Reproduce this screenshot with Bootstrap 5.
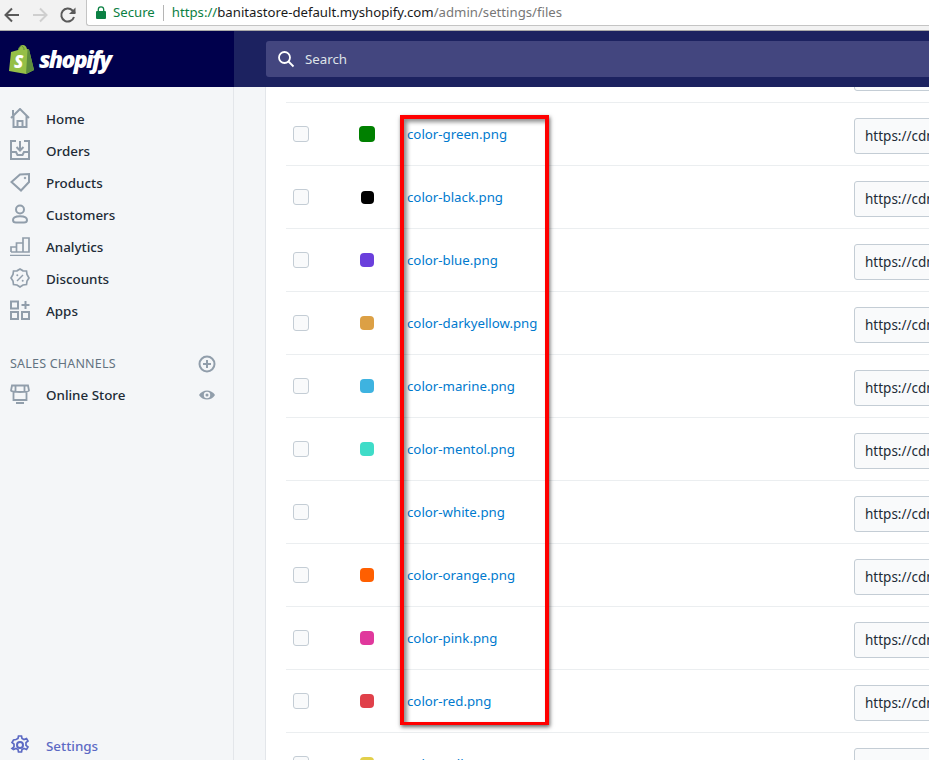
<!DOCTYPE html>
<html lang="en">
<head>
  <meta charset="UTF-8" />
  <title>Files - Shopify admin</title>
  <meta name="viewport" content="width=device-width, initial-scale=1" />
  <link href="https://cdn.jsdelivr.net/npm/bootstrap@5.3.2/dist/css/bootstrap.min.css" rel="stylesheet" />
  <style>
    html, body { height: 760px; overflow: hidden; }
    body { font-family: "Noto Sans", "Open Sans", sans-serif; font-size: 14px; background: #fff; position: relative; }

    .chrome-bar { height: 31px; background: #f2f2f2; border-bottom: 1px solid #a9a9a9; padding-left: 1px; }
    .chrome-btn { width: 22px; height: 22px; margin-right: 6px; flex: none; }
    .omnibox { flex: 1; height: 26px; margin-top: -4px; margin-left: 1px; background: #fff; border: 1px solid #c4c4c4; border-top: 0; border-right: 0; border-radius: 0 0 0 3px; font-size: 13.2px; padding-left: 9px; white-space: nowrap; overflow: hidden; }
    .secure-txt { color: #0b8043; margin-left: 7px; }
    .omni-sep { width: 1px; height: 16px; background: #b5b5b5; margin: 0 8px; }
    .url-scheme { color: #0b8043; }
    .url-host { color: #1a1a1a; }
    .url-path { color: #777; }

    .top-strip { height: 56px; background: #1c2260; }
    .brand-area { width: 234px; background: #00004c; padding-left: 9px; flex: none; }
    .brand-word { color: #fff; font-family: "Open Sans", sans-serif; font-weight: 800; font-style: italic; font-size: 23px; letter-spacing: -1.7px; margin-left: 4px; line-height: 1; }
    .search-box { margin-left: 32px; flex: 1; height: 36px; background: #43467f; border-radius: 3px 0 0 3px; color: #dfe3e8; padding-left: 11px; font-size: 13.3px; }
    .search-box svg { margin-right: 10px; }
    .search-box span { padding-top: 2px; }

    .shell { height: 673px; background: #f4f6f8; }
    .side-nav { width: 234px; flex: none; border-right: 1px solid #e3e6ea; position: relative; padding-top: 16px; }
    .nav-entry { height: 32px; padding-left: 10px; color: #212b36; font-weight: 500; font-size: 13.4px; }
    .nav-entry svg { width: 20px; height: 20px; margin-right: 16px; margin-top: -2px; flex: none; color: #919eab; }
    .channels-head { height: 29px; margin-top: 23px; padding: 0 17px 0 10px; color: #637381; font-size: 12.5px; letter-spacing: .2px; }
    .nav-trail { width: 18px; height: 18px; color: #919eab; flex: none; }
    .channels-head .nav-trail { margin-top: -2px; }
    .nav-entry .nav-trail { width: 18px; height: 18px; margin-right: 0; margin-top: 0; }
    .online-row { padding-right: 17px; }
    .settings-row { position: absolute; left: 0; bottom: -2px; color: #5c6ac4; height: 32px; }
    .settings-row svg { color: #5c6ac4; }

    .gutter { width: 32px; flex: none; border-right: 1px solid #e3e6ea; }
    .main-panel { flex: 1; background: #fff; overflow: hidden; padding-left: 20px; }
    .file-list { margin-top: -47px; }
    .file-row { height: 63px; border-bottom: 1px solid #ebeef0; }
    .file-check { width: 16px; height: 16px; margin-left: 7px; flex: none; background: #f9fafb; border: 1px solid #c4cdd5; border-radius: 3px; }
    .swatch-cell { width: 42px; margin-left: 37px; flex: none; }
    .swatch { width: 14px; height: 14px; border-radius: 4px; }
    .sw-green { background: #008000; width: 16px; height: 16px; border-radius: 4px; }
    .sw-black { background: #000; width: 13px; height: 13px; border-radius: 4px; }
    .sw-blue { background: #6a3fdc; }
    .sw-yellowdark { background: #dca045; }
    .sw-marine { background: #3eb3e0; }
    .sw-mentol { background: #3fdcc8; }
    .sw-orange { background: #ff5f00; }
    .sw-pink { background: #e0389c; }
    .sw-red { background: #e0404a; }
    .sw-yellow { background: #e2cf4a; }
    .file-name { color: #007ace; margin-left: 19px; width: 447px; flex: none; text-decoration: none; font-size: 13.25px; line-height: 20px; padding-bottom: 1px; }
    .url-field { flex: none; width: 120px; height: 36px; margin-top: 4px; background: #f9fafb; border: 1px solid #c4cdd5; border-radius: 3px; padding: 0 10px; color: #212b36; font-size: 13.5px; line-height: 34px; white-space: nowrap; }

    .mark-box { position: absolute; left: 400px; top: 115px; width: 149px; height: 610px; border: solid #ff0000; border-width: 4px 4px 3px 4px; box-shadow: 1px 2px 4px rgba(0,0,0,.6), inset 3px 3px 4px rgba(0,0,0,.45); pointer-events: none; }
  </style>
</head>
<body>
  <div class="chrome-bar d-flex align-items-center">
    <svg class="chrome-btn" viewBox="0 0 22 22" fill="none" stroke="#5a5a5a" stroke-width="2"><path d="M18 11H5M11 4.5 4.5 11l6.500 6.500"/></svg>
    <svg class="chrome-btn" viewBox="0 0 22 22" fill="none" stroke="#cfcfcf" stroke-width="2"><path d="M4 11h13M11 4.500l6.500 6.500-6.500 6.500"/></svg>
    <svg class="chrome-btn" viewBox="0 0 22 22" fill="none" stroke="#5a5a5a" stroke-width="2"><path d="M17 13a6.500 6.500 0 1 1-1.500-6.500L18 9"/><path d="M18.500 3.500V10H12" fill="#5a5a5a" stroke="none"/></svg>
    <div class="omnibox d-flex align-items-center">
      <svg width="10" height="13" viewBox="0 0 10 13"><path d="M2.300 5V3.500a2.700 2.700 0 0 1 5.400 0V5" fill="none" stroke="#0b8043" stroke-width="1.300"/><rect y="5" width="10" height="8" rx="1" fill="#0b8043"/></svg>
      <span class="secure-txt">Secure</span>
      <span class="omni-sep"></span>
      <span><span class="url-scheme">https://</span><span class="url-host">banitastore-default.myshopify.com</span><span class="url-path">/admin/settings/files</span></span>
    </div>
  </div>

  <div class="top-strip d-flex">
    <div class="brand-area d-flex align-items-center">
      <span class="position-relative d-inline-block">
        <svg width="26" height="31" viewBox="0 0 26 31" class="d-block"><path d="M2 8 9 6c1-3 3-5 5-5s3 1 4 4l2 .500L25 26l-8 4L0 27Z" fill="#95bf47"/><path d="M20 5.500 25 26l-8 4 1.500-24.500Z" fill="#5e8e3e"/><path d="M9.500 6c.5-3 2-4.500 3.500-4.500M13 2.500c1.500 0 2 1.500 2 3.500" fill="none" stroke="#5e8e3e" stroke-width="1"/><text x="5" y="24" fill="#fff" font-family="Open Sans, sans-serif" font-weight="800" font-style="italic" font-size="17">S</text></svg>
      </span>
      <span class="brand-word">shopify</span>
    </div>
    <div class="flex-grow-1 d-flex align-items-center">
      <div class="search-box d-flex align-items-center">
        <svg width="18" height="18" viewBox="0 0 18 18" fill="none" stroke="#fff" stroke-width="1.800"><circle cx="7.500" cy="7.500" r="5.500"/><path d="m11.500 11.500 5 5"/></svg>
        <span>Search</span>
      </div>
    </div>
  </div>

  <div class="shell d-flex">
    <nav class="side-nav">
      <div class="nav-entry d-flex align-items-center">
        <svg viewBox="0 0 20 20" fill="none" stroke="currentColor" stroke-width="2"><path d="M3 2v5M1 10 10 1l9 9M3.500 8v11h13V8M7.500 19v-6h5v6"/></svg>Home
      </div>
      <div class="nav-entry d-flex align-items-center">
        <svg viewBox="0 0 20 20" fill="none" stroke="currentColor" stroke-width="2"><path d="M6 1H1v18h18V1h-5M1 12h5l1.500 3h5l1.500-3h5M10 1v9M6.500 7l3.500 3.500L13.500 7"/></svg>Orders
      </div>
      <div class="nav-entry d-flex align-items-center">
        <svg viewBox="0 0 20 20" fill="none" stroke="currentColor" stroke-width="2"><path d="M19 2v8l-8 8.500L1.500 10 10 2.500Z"/><circle cx="15" cy="6" r=".8" fill="currentColor" stroke-width="1"/></svg>Products
      </div>
      <div class="nav-entry d-flex align-items-center">
        <svg viewBox="0 0 20 20" fill="none" stroke="currentColor" stroke-width="2"><circle cx="10" cy="5.500" r="4"/><path d="M3 16c0-5 14-5 14 0 0 2-1.500 2.500-3 2.500H6c-1.500 0-3-.5-3-2.500Z"/></svg>Customers
      </div>
      <div class="nav-entry d-flex align-items-center">
        <svg viewBox="0 0 20 20" fill="none" stroke="currentColor" stroke-width="2"><path d="M1 16v-5h5.500v5M6.500 16V7H13v9M13 16V2h6v14H1M0 19.500h20" stroke-width="1.700"/></svg>Analytics
      </div>
      <div class="nav-entry d-flex align-items-center">
        <svg viewBox="0 0 20 20" fill="none" stroke="currentColor" stroke-width="2"><path d="M10 1l3 1.800 3.500.2.500 3.500L19 10l-2 3 -.5 3.500-3.500.5-3 2-3-2-3.500-.5L3 13l-2-3 2-3.500L3.500 3 7 2.800Z" stroke-width="1.700"/><path d="m7 13 6-6" stroke-width="1.500"/><circle cx="7.300" cy="7.300" r="1" fill="currentColor" stroke="none"/><circle cx="12.700" cy="12.700" r="1" fill="currentColor" stroke="none"/></svg>Discounts
      </div>
      <div class="nav-entry d-flex align-items-center">
        <svg viewBox="0 0 20 20" fill="none" stroke="currentColor" stroke-width="2"><rect x="1" y="1.500" width="7" height="7"/><rect x="1" y="12" width="7" height="7"/><rect x="12" y="12" width="7" height="7"/><path d="M15.500 1v8M11.500 5h8"/></svg>Apps
      </div>
      <div class="channels-head d-flex align-items-center justify-content-between">
        <span>SALES CHANNELS</span>
        <svg class="nav-trail" viewBox="0 0 18 18" fill="none" stroke="currentColor" stroke-width="2"><circle cx="9" cy="9" r="7.500"/><path d="M9 5v8M5 9h8"/></svg>
      </div>
      <div class="nav-entry online-row d-flex align-items-center">
        <svg viewBox="0 0 20 20" fill="none" stroke="currentColor" stroke-width="2"><path d="M2 1.500h16l1 5c0 2-18 2-18 0ZM3.500 8v8h13V8M6 19h8M5.500 2v5M14.500 2v5" stroke-width="1.800"/></svg>
        <span class="flex-grow-1">Online Store</span>
        <svg class="nav-trail" viewBox="0 0 18 18"><path d="M1 9c3.500-6 12.500-6 16 0-3.500 6-12.500 6-16 0Z" fill="currentColor"/><circle cx="9" cy="9" r="3.200" fill="#f4f6f8"/><circle cx="9" cy="9" r="1.500" fill="currentColor"/></svg>
      </div>
      <div class="nav-entry settings-row d-flex align-items-center">
        <svg viewBox="0 0 20 20" fill="none" stroke="currentColor" stroke-width="2"><circle cx="10" cy="10" r="3"/><path d="M8.500 1h3l.5 2.500 2 1 2.500-1 1.500 2.500-2 1.700v2.600l2 1.700-1.500 2.500-2.500-1-2 1-.5 2.500h-3l-.5-2.500-2-1-2.500 1L2 13.500l2-1.700V9.200L2 7.500 3.500 5 6 4.500l2-1Z" stroke-width="1.700"/></svg>Settings
      </div>
    </nav>
    <div class="gutter"></div>
    <main class="main-panel">
      <div class="file-list">
        <div class="file-row d-flex align-items-center"><span class="file-check"></span><span class="swatch-cell d-flex justify-content-center"><span class="swatch"></span></span><a class="file-name" href="#"></a><span class="url-field">https://cdn</span></div>
        <div class="file-row d-flex align-items-center"><span class="file-check"></span><span class="swatch-cell d-flex justify-content-center"><span class="swatch sw-green"></span></span><a class="file-name" href="#">color-green.png</a><span class="url-field">https://cdn</span></div>
        <div class="file-row d-flex align-items-center"><span class="file-check"></span><span class="swatch-cell d-flex justify-content-center"><span class="swatch sw-black"></span></span><a class="file-name" href="#">color-black.png</a><span class="url-field">https://cdn</span></div>
        <div class="file-row d-flex align-items-center"><span class="file-check"></span><span class="swatch-cell d-flex justify-content-center"><span class="swatch sw-blue"></span></span><a class="file-name" href="#">color-blue.png</a><span class="url-field">https://cdn</span></div>
        <div class="file-row d-flex align-items-center"><span class="file-check"></span><span class="swatch-cell d-flex justify-content-center"><span class="swatch sw-yellowdark"></span></span><a class="file-name" href="#">color-darkyellow.png</a><span class="url-field">https://cdn</span></div>
        <div class="file-row d-flex align-items-center"><span class="file-check"></span><span class="swatch-cell d-flex justify-content-center"><span class="swatch sw-marine"></span></span><a class="file-name" href="#">color-marine.png</a><span class="url-field">https://cdn</span></div>
        <div class="file-row d-flex align-items-center"><span class="file-check"></span><span class="swatch-cell d-flex justify-content-center"><span class="swatch sw-mentol"></span></span><a class="file-name" href="#">color-mentol.png</a><span class="url-field">https://cdn</span></div>
        <div class="file-row d-flex align-items-center"><span class="file-check"></span><span class="swatch-cell d-flex justify-content-center"><span class="swatch"></span></span><a class="file-name" href="#">color-white.png</a><span class="url-field">https://cdn</span></div>
        <div class="file-row d-flex align-items-center"><span class="file-check"></span><span class="swatch-cell d-flex justify-content-center"><span class="swatch sw-orange"></span></span><a class="file-name" href="#">color-orange.png</a><span class="url-field">https://cdn</span></div>
        <div class="file-row d-flex align-items-center"><span class="file-check"></span><span class="swatch-cell d-flex justify-content-center"><span class="swatch sw-pink"></span></span><a class="file-name" href="#">color-pink.png</a><span class="url-field">https://cdn</span></div>
        <div class="file-row d-flex align-items-center"><span class="file-check"></span><span class="swatch-cell d-flex justify-content-center"><span class="swatch sw-red"></span></span><a class="file-name" href="#">color-red.png</a><span class="url-field">https://cdn</span></div>
        <div class="file-row d-flex align-items-center"><span class="file-check"></span><span class="swatch-cell d-flex justify-content-center"><span class="swatch sw-yellow"></span></span><a class="file-name" href="#">color-yellow.png</a><span class="url-field">https://cdn</span></div>
      </div>
    </main>
  </div>

  <div class="mark-box"></div>
</body>
</html>
